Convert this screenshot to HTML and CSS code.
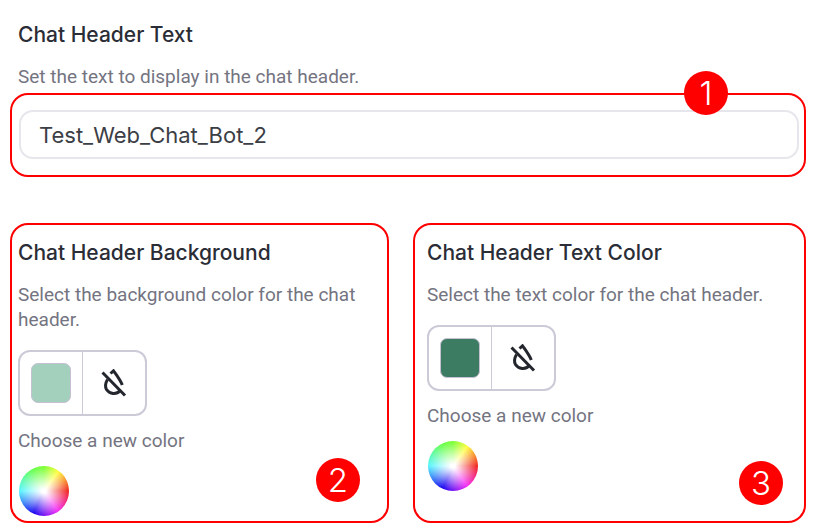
FILE: index.html
```html
<!DOCTYPE html>
<html lang="en">
<head>
  <meta charset="UTF-8">
  <meta name="viewport" content="width=device-width, initial-scale=1">
  <title>Chat Header</title>
  <link rel="stylesheet" href="styles.css">
</head>
<body>

  <div class="intro">
    <h2><label for="header-text">Chat Header Text</label></h2>
    <p id="header-text-help">Set the text to display in the chat header.</p>
  </div>

  <div class="outline text-box">
    <input type="text" id="header-text" value="Test_Web_Chat_Bot_2" aria-describedby="header-text-help">
    <span class="badge">1</span>
  </div>

  <div class="cards">
    <section class="outline card background-card">
      <h2>Chat Header Background</h2>
      <p>Select the background color for the chat header.</p>
      <div class="picker">
        <button type="button" aria-label="Current color"><span class="swatch mint"></span></button>
        <button type="button" aria-label="Clear color">
          <svg class="drop" viewBox="0 0 28 28"><use href="#drop-off"/></svg>
        </button>
      </div>
      <label for="background-wheel">Choose a new color</label>
      <button type="button" class="wheel" id="background-wheel"></button>
      <span class="badge">2</span>
    </section>

    <section class="outline card text-card">
      <h2>Chat Header Text Color</h2>
      <p>Select the text color for the chat header.</p>
      <div class="picker">
        <button type="button" aria-label="Current color"><span class="swatch green"></span></button>
        <button type="button" aria-label="Clear color">
          <svg class="drop" viewBox="0 0 28 28"><use href="#drop-off"/></svg>
        </button>
      </div>
      <label for="text-wheel">Choose a new color</label>
      <button type="button" class="wheel" id="text-wheel"></button>
      <span class="badge">3</span>
    </section>
  </div>

  <svg class="sprite">
    <symbol id="drop-off" viewBox="0 0 28 28">
      <path d="M2.500 3.500L25 26.500"/>
      <path d="M10.500 4.500L13.500 1.800C16.500 6 20 10.500 22.300 16"/>
      <path d="M7.500 10.400C4.800 15 5.200 18 6.500 20.500C9.500 25.200 16.500 25.800 20 21.800"/>
    </symbol>
  </svg>

</body>
</html>
```

FILE: styles.css
```css
* {
  box-sizing: border-box;
}
body {
  margin: 0;
  padding: 20px 8px 6px 10px;
  background-color: white;
  color: #747481;
  font-family: Roboto, sans-serif;
  font-size: 19px;
  line-height: 25px;
}
h2 {
  margin: 0 0 14px;
  color: #2b2d36;
  font-family: Inter, sans-serif;
  font-size: 21px;
  font-weight: 500;
  line-height: 30px;
}
p {
  margin: 0;
}
.intro {
  padding: 0 8px 4px;
}
.outline {
  position: relative;
  border: 2px solid #ff0000;
  border-radius: 18px;
}
.text-box {
  padding: 15px 5px 16px 7px;
}
input {
  display: block;
  width: 100%;
  height: 49px;
  padding: 0 18px;
  border: 2px solid #e6e6ec;
  border-radius: 14px;
  background-color: white;
  color: #3c3e45;
  font-family: Inter, sans-serif;
  font-size: 22px;
}
.cards {
  display: grid;
  grid-template-columns: 379fr 393fr;
  gap: 24px;
  margin-top: 46px;
}
.card {
  display: flex;
  flex-direction: column;
  align-items: flex-start;
  padding: 13px 18px 5px 6px;
}
.text-card {
  padding-left: 12px;
}
.picker {
  display: flex;
  width: 129px;
  height: 66px;
  margin: 18px 0 12px;
  border: 2px solid #cdcad8;
  border-radius: 12px;
}
button {
  display: flex;
  flex: 1;
  align-items: center;
  justify-content: center;
  padding: 0;
  border: 0;
  background: none;
  cursor: pointer;
}
.picker button + button {
  border-left: 1px solid #cdcad8;
}
.swatch {
  width: 40px;
  height: 40px;
  border: 1px solid #c5c0d2;
  border-radius: 7px;
}
.mint {
  background-color: #a3cfbd;
}
.green {
  background-color: #3c7c62;
}
.drop {
  width: 28px;
  height: 28px;
  fill: none;
  stroke: #24262e;
  stroke-width: 3;
}
.wheel {
  flex: none;
  width: 50px;
  height: 50px;
  margin: 13px 0 0 1px;
  border-radius: 50%;
  background:
    radial-gradient(closest-side, white 8%, rgba(255, 255, 255, 0.6) 45%, rgba(255, 255, 255, 0)),
    conic-gradient(#78ff2e, #ffff3c 36deg, #f0201a 90deg, #f52cf5 145deg, #1500f0 205deg, #55f5ff 270deg, #63ff4e 330deg, #78ff2e);
}
.badge {
  position: absolute;
  right: 76px;
  top: -24px;
  width: 44px;
  height: 44px;
  border-radius: 50%;
  background-color: #ff0000;
  color: white;
  font-family: Inter, sans-serif;
  font-size: 33px;
  font-weight: 300;
  line-height: 44px;
  text-align: center;
}
.card .badge {
  top: auto;
  right: 27px;
  bottom: 19px;
}
.text-card .badge {
  right: 21px;
  bottom: 16px;
}
.sprite {
  display: none;
}
```
